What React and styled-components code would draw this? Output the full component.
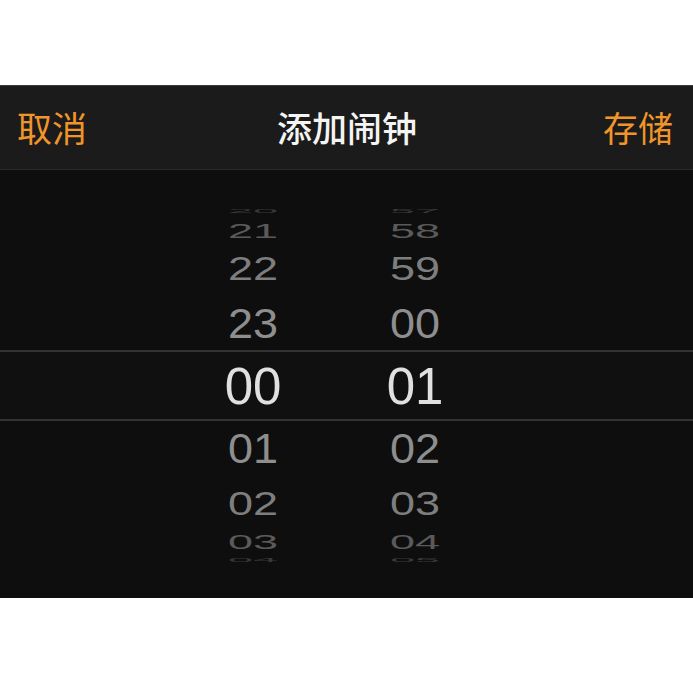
import React from 'react';
import styled, { createGlobalStyle } from 'styled-components';

const GlobalStyle = createGlobalStyle`
	html, body {
		margin: 0;
		padding: 0;
		background: #FFFFFF;
	}
`;

// wheel geometry: angle between items and radius of the drum
const ITEM_ANGLE = 21;
const RADIUS = 178;

const hours = ['20', '21', '22', '23', '00', '01', '02', '03', '04'];
const minutes = ['57', '58', '59', '00', '01', '02', '03', '04', '05'];

const rad = deg => (Math.max(-90, Math.min(90, deg)) * Math.PI) / 180;

const Screen = styled.div`
	margin-top: 85px;
	width: 693px;
	font-family: "Noto Sans CJK SC", "Noto Sans", sans-serif;
`;

const NavBar = styled.div`
	height: 85px;
	background: #1B1B1B;
	border-top: 1px solid #3A3A3A;
	border-bottom: 1px solid #2A2A2A;
	display: flex;
	align-items: center;
	justify-content: space-between;
	padding: 0 20px 2px 17px;
	box-sizing: border-box;
`;

const NavButton = styled.span`
	color: #F0952A;
	font-size: 35px;
	font-weight: 400;
`;

const Title = styled.span`
	color: #F4F4F4;
	font-size: 35px;
	font-weight: 500;
	margin-left: 4px;
`;

const Picker = styled.div`
	position: relative;
	height: 428px;
	background: #0E0E0E;
	display: flex;
	align-items: center;
	padding: 4px 0 0 193px;
	gap: 42px;
	box-sizing: border-box;

	&::before {
		content: '';
		position: absolute;
		left: 0;
		right: 0;
		top: 180px;
		height: 67px;
		border-top: 2px solid #333333;
		border-bottom: 2px solid #333333;
		background: #101010;
	}
`;

const Wheel = styled.div`
	position: relative;
	width: 120px;
	display: flex;
	flex-direction: column;
`;

const Row = styled.div`
	display: flex;
	align-items: center;
	justify-content: center;
	overflow: visible;
`;

const shades = ['#E0E0E0', '#8E8E8E', '#7E7E7E', '#5A5A5A', '#383838'];

const Digits = styled.span`
	font-family: "Liberation Sans", Arial, sans-serif;
	font-size: ${props => (props.$selected ? '51px' : '45px')};
	line-height: 1;
	color: ${props => shades[props.$depth]};
	white-space: nowrap;
`;

function Column({ values }) {
	const mid = Math.floor(values.length / 2);
	return (
		<Wheel>
			{values.map((v, i) => {
				const k = i - mid;
				const angle = k * ITEM_ANGLE;
				const h = RADIUS * (Math.sin(rad(angle + ITEM_ANGLE / 2)) - Math.sin(rad(angle - ITEM_ANGLE / 2)));
				const squash = Math.cos(rad(angle));
				return (
					<Row key={i} style={{ height: h }}>
						<Digits
							$selected={k === 0}
							$depth={Math.min(4, Math.abs(k))}
							style={{ transform: `scaleY(${squash.toFixed(3)})` }}
						>
							{v}
						</Digits>
					</Row>
				);
			})}
		</Wheel>
	);
}

export default function App() {
	return (
		<>
			<GlobalStyle />
			<Screen>
				<NavBar>
					<NavButton>取消</NavButton>
					<Title>添加闹钟</Title>
					<NavButton>存储</NavButton>
				</NavBar>
				<Picker>
					<Column values={hours} />
					<Column values={minutes} />
				</Picker>
			</Screen>
		</>
	);
}
